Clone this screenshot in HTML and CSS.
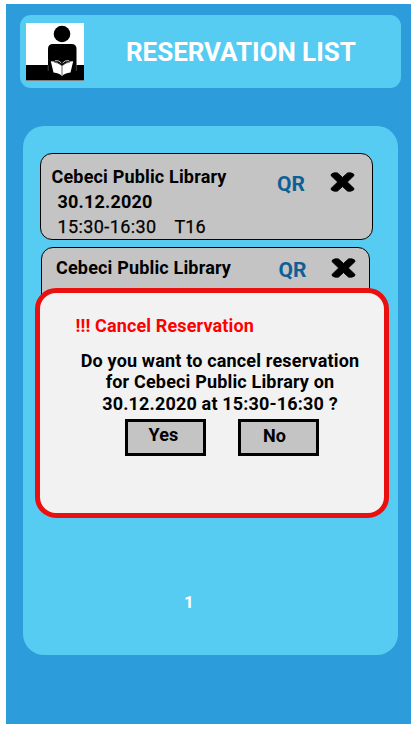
FILE: index.html
```html
<!DOCTYPE html>
<html lang="en">
<head>
<meta charset="utf-8">
<title>Reservation List</title>
<link rel="stylesheet" href="styles.css">
</head>
<body>
<main class="screen">
  <header class="header">
    <svg class="logo" viewBox="0 0 58 58" aria-hidden="true">
      <path fill="#fff" d="M0 0h58v58H0z"/>
      <path d="M0 42h58v15.500H0z"/>
      <circle cx="36" cy="11" r="8.300"/>
      <path d="M22 48V26q0-5 5-5h18.500q5 0 5 5v22z"/>
      <path d="M22.200 42v6M50.300 42v6" fill="none" stroke="#888" stroke-width=".5"/>
      <path fill="#fff" d="M24.800 38.300Q32 38.500 36 43Q40 38.500 47.200 38.300L44.500 49.500Q38.500 50 36 53Q33.500 50 27.500 49.500z"/>
      <path fill="none" stroke="#fff" stroke-width=".8" d="M29 37.700q4-.8 6.400 2.300M43 37.700q-4-.8-6.400 2.300"/>
      <path fill="none" stroke="#222" stroke-width=".7" d="M36 42.500v10M28 39q4 .5 7 3M44 39q-4 .5-7 3"/>
    </svg>
    <h1 class="title">RESERVATION LIST</h1>
  </header>
  <section class="panel">
    <article class="card">
      <div class="details">
        <h2 class="name">Cebeci Public Library</h2>
        <p class="date">30.12.2020</p>
        <p class="slot"><span class="hours">15:30-16:30</span><span>T16</span></p>
      </div>
      <span class="qr">QR</span>
      <svg class="cancel" viewBox="0 0 25 20" aria-label="Cancel"><path d="M1.500 2Q4 .2 7.500 1L12.500 5.500L17.500 1Q21 .2 23.500 2L24 3.500L17.300 10L24 16.500L23.500 18Q21 19.800 17.500 19L12.500 14.500L7.500 19Q4 19.800 1.500 18L1 16.500L7.700 10L1 3.500z"/></svg>
    </article>
    <article class="card second">
      <div class="details">
        <h2 class="name">Cebeci Public Library</h2>
      </div>
      <span class="qr">QR</span>
      <svg class="cancel" viewBox="0 0 25 20" aria-label="Cancel"><path d="M1.500 2Q4 .2 7.500 1L12.500 5.500L17.500 1Q21 .2 23.500 2L24 3.500L17.300 10L24 16.500L23.500 18Q21 19.800 17.500 19L12.500 14.500L7.500 19Q4 19.800 1.500 18L1 16.500L7.700 10L1 3.500z"/></svg>
    </article>
    <p class="page">1</p>
    <div class="modal" role="dialog">
      <h2 class="warning">!!! Cancel Reservation</h2>
      <p class="question">Do you want to cancel reservation<br>for Cebeci Public Library on<br>30.12.2020 at 15:30-16:30 ?</p>
      <div class="actions">
        <button class="button yes">Yes</button>
        <button class="button no">No</button>
      </div>
    </div>
  </section>
</main>
</body>
</html>
```
FILE: styles.css
```css
* { box-sizing: border-box; margin: 0; padding: 0; }
body { background: #fff; font-family: Roboto, sans-serif; font-size: 18px; color: #000; height: 729px; padding: 4px 0 0 6px; overflow: hidden; }
.screen { width: 404.500px; height: 720px; background: #2d9cdb; padding: 10.500px 9.500px 0 14px; }
.header { width: 381px; height: 73px; background: #56ccf2; border-radius: 11px; display: flex; align-items: center; padding-left: 6px; }
.logo { width: 58px; height: 58px; display: block; margin-top: 1px; }
.title { margin: 2px 0 0 42px; font-size: 26px; line-height: 30px; font-weight: 700; letter-spacing: -.05px; color: #fff; white-space: nowrap; }
.panel { position: relative; width: 375px; height: 529px; margin: 38px 0 0 3px; padding: 27.500px 0 0 17px; background: #56ccf2; border-radius: 21px; display: flex; flex-direction: column; }
.card { width: 333px; height: 87px; flex: none; background: #c4c4c4; border: 1px solid #000; border-radius: 12px; padding: 11px 17px 0 10.500px; display: flex; align-items: flex-start; }
.second { width: 328.500px; margin: 7px 0 0 1px; padding: 8px 13px 0 14px; }
.details { flex: 1; }
.name { font-size: 18px; line-height: 24px; font-weight: 700; letter-spacing: .17px; white-space: nowrap; }
.date { font-size: 18px; line-height: 26px; font-weight: 700; letter-spacing: .2px; padding-left: 6px; }
.slot { font-size: 18px; line-height: 25px; padding-left: 6px; display: flex; gap: 18px; margin-top: -1px; -webkit-text-stroke: .25px #000; }
.hours { letter-spacing: .4px; }
.qr { font-size: 21px; line-height: 24px; font-weight: 700; color: #0f5f96; margin: 7px 25px 0 0; }
.second .qr { margin: 2px 24px 0 0; }
.cancel { width: 25px; height: 20px; margin-top: 7px; }
.cancel path { stroke: #000; stroke-width: 1; stroke-linejoin: round; }
.second .cancel { margin-top: 2px; }
.page { margin: 258px 0 0 144px; font-size: 17px; line-height: 20px; font-weight: 700; color: #fff; }
.modal { position: absolute; left: 12px; top: 162.500px; width: 354px; height: 229.500px; background: #f2f2f2; border: 5px solid #eb1010; border-radius: 21px; padding-top: 21px; }
.warning { margin-left: 35.500px; font-size: 18px; line-height: 24px; font-weight: 700; letter-spacing: .13px; color: #f00; }
.question { margin: 11.500px 0 0 16px; width: 328px; font-size: 18px; line-height: 21.700px; font-weight: 700; letter-spacing: .17px; text-align: center; white-space: nowrap; }
.actions { display: flex; gap: 32px; margin: 4px 0 0 85px; }
.button { width: 81px; height: 37px; background: #c4c4c4; border: 3px solid #000; font: 700 18px/24px Roboto, sans-serif; letter-spacing: .1px; color: #000; display: flex; align-items: flex-start; justify-content: flex-start; }
.yes { padding: 1px 0 0 20.500px; }
.no { padding: 2px 0 0 22px; }
```
